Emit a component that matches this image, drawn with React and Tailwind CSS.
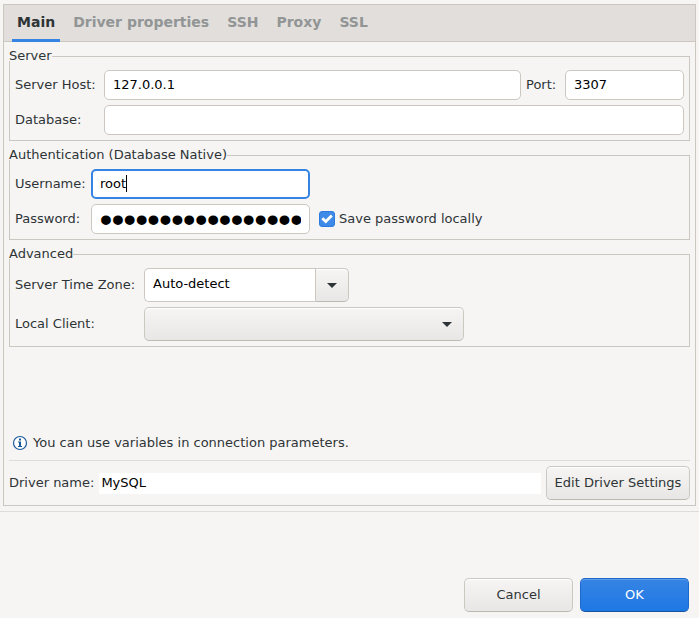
import { useState } from "react";

const box =
  "h-[30px] w-full min-w-0 rounded-[5px] border border-[#cdc7c2] bg-white px-2 text-black outline-none";
const field = `${box} pb-[2px]`;
const raised =
  "border border-[#cdc7c2] border-b-[#bfb8b1] bg-linear-to-b from-[#f6f5f4] to-[#e9e7e5] shadow-[inset_0_1px_#ffffff]";

const tabs = ["Main", "Driver properties", "SSH", "Proxy", "SSL"];

function Arrow() {
  return (
    <svg width="10" height="5" viewBox="0 0 10 5" aria-hidden="true">
      <path d="M0 0h10L5 5z" fill="#2e3436" />
    </svg>
  );
}

function Group({ title, children }) {
  return (
    <fieldset className="min-w-0 border border-[#cdc7c2] px-[5px] pb-[5px] pt-[9px]">
      <legend className="-ml-[6px] bg-[#f6f5f4] pb-[2px] leading-[7px]">{title}</legend>
      {children}
    </fieldset>
  );
}

function InfoIcon() {
  return (
    <svg width="16" height="16" viewBox="0 0 16 16" fill="none" aria-hidden="true">
      <circle cx="8" cy="8" r="6.5" fill="#ffffff" stroke="#1b5a9a" strokeWidth="1.2" />
      <path d="M7 3.5h2v2H7zM6 6.5h3v4.5h1v1H6v-1h1V7.5H6z" fill="#1b5a9a" />
    </svg>
  );
}

export default function App() {
  const [active, setActive] = useState("Main");

  return (
    <div className="flex min-h-screen flex-col bg-[#f6f5f4] font-['DejaVu_Sans',sans-serif] text-[13px] leading-5 text-[#2e3436]">
      <main className="mx-[3px] mb-[5px] mt-1 flex flex-1 flex-col border border-[#cdc7c2]">
        <div role="tablist" className="flex h-[37px] gap-2 border-b border-[#cdc7c2] bg-[#e1dedb] px-2">
          {tabs.map((tab) => (
            <button
              key={tab}
              type="button"
              role="tab"
              aria-selected={active === tab}
              onClick={() => setActive(tab)}
              className={`-mb-px border-b-3 px-[5px] text-[14px] font-bold ${
                active === tab ? "border-[#3584e4]" : "border-transparent text-[#929595]"
              }`}
            >
              {tab}
            </button>
          ))}
        </div>

        <div className="flex flex-1 flex-col gap-[10px] px-[5px] pb-[5px] pt-[10px]">
          <Group title="Server">
            <div className="grid grid-cols-[84px_1fr_34px_119px] items-center gap-[5px]">
              <label htmlFor="host">Server Host:</label>
              <input id="host" className={field} defaultValue="127.0.0.1" />
              <label htmlFor="port">Port:</label>
              <input id="port" className={field} defaultValue="3307" />
              <label htmlFor="database">Database:</label>
              <input id="database" className={`${field} col-span-3`} />
            </div>
          </Group>

          <Group title="Authentication (Database Native)">
            <div className="grid grid-cols-[71px_219px_1fr] items-center gap-[5px]">
              <label htmlFor="username">Username:</label>
              <div className="relative">
                <input
                  id="username"
                  className="block h-[30px] w-full rounded-[5px] border-2 border-[#3584e4] bg-white px-[7px] pb-[2px] text-black caret-transparent outline-none"
                  defaultValue="root"
                />
                <span className="absolute left-[35px] top-[6px] h-[17px] w-px bg-black" />
              </div>
              <span />
              <label htmlFor="password">Password:</label>
              <input
                id="password"
                type="password"
                className={`${box} font-['Liberation_Sans',sans-serif] text-[34px] font-bold`}
                defaultValue="secretsecretsecret"
              />
              <label className="flex items-center gap-1 pl-1">
                <span className="relative flex">
                  <input
                    type="checkbox"
                    defaultChecked
                    className="peer size-4 appearance-none rounded-[3px] border border-[#cdc7c2] bg-white checked:border-[#2b7be0] checked:bg-[#3f8ae6]"
                  />
                  <svg
                    className="pointer-events-none absolute inset-0 hidden peer-checked:block"
                    width="16"
                    height="16"
                    viewBox="0 0 16 16"
                    fill="none"
                    aria-hidden="true"
                  >
                    <path d="M3.3 7.2l3.5 3.4 6-6" stroke="#ffffff" strokeWidth="2.8" />
                  </svg>
                </span>
                Save password locally
              </label>
            </div>
          </Group>

          <Group title="Advanced">
            <div className="grid grid-cols-[124px_1fr] items-center gap-[5px]">
              <label htmlFor="zone">Server Time Zone:</label>
              <div className="flex h-[34px] w-[205px]">
                <input
                  id="zone"
                  className="min-w-0 flex-1 rounded-l-[5px] border border-r-0 border-[#cdc7c2] bg-white px-2 pb-[2px] text-black outline-none"
                  defaultValue="Auto-detect"
                />
                <button
                  type="button"
                  aria-label="Show time zones"
                  className={`flex w-[34px] items-center justify-center rounded-r-[5px] ${raised}`}
                >
                  <Arrow />
                </button>
              </div>
              <label htmlFor="client">Local Client:</label>
              <div className="relative w-[320px]">
                <select
                  id="client"
                  className={`block h-[34px] w-full appearance-none rounded-[5px] px-2 outline-none ${raised}`}
                >
                  <option value="" />
                </select>
                <span className="pointer-events-none absolute inset-y-0 right-3 flex items-center">
                  <Arrow />
                </span>
              </div>
            </div>
          </Group>

          <div className="mt-auto">
            <p className="flex items-center gap-[5px] pb-[7px] pl-[3px]">
              <InfoIcon />
              You can use variables in connection parameters.
            </p>
            <div className="flex items-center gap-[5px] border-t border-[#dedbd8] pt-[5px]">
              <label htmlFor="driver">Driver name:</label>
              <input
                id="driver"
                readOnly
                className="h-[21px] min-w-0 flex-1 bg-white px-[2px] pb-[2px] text-black outline-none"
                value="MySQL"
              />
              <button type="button" className={`h-[34px] w-36 rounded-[5px] ${raised}`}>
                Edit Driver Settings
              </button>
            </div>
          </div>
        </div>
      </main>

      <footer className="flex justify-end gap-[7px] border-t border-[#dedbd8] px-[10px] pb-[6px] pt-[66px]">
        <button type="button" className={`h-[34px] w-[109px] rounded-[5px] ${raised}`}>
          Cancel
        </button>
        <button
          type="button"
          className="h-[34px] w-[109px] rounded-[5px] border border-[#1b6acb] border-b-[#15539e] bg-linear-to-b from-[#3584e4] to-[#1e78e4] text-white shadow-[inset_0_1px_#5d9de9]"
        >
          OK
        </button>
      </footer>
    </div>
  );
}
